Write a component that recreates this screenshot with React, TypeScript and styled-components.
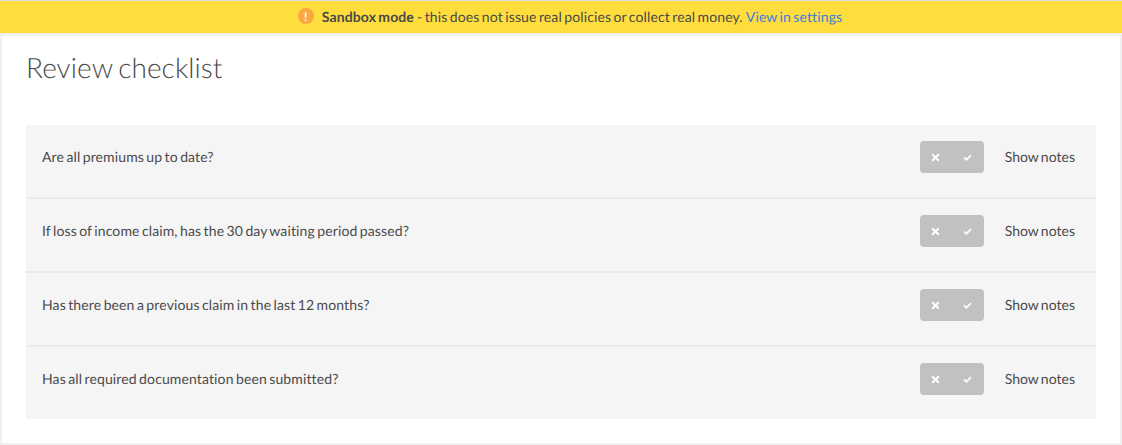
import styled, { createGlobalStyle } from "styled-components"

const questions = [
  "Are all premiums up to date?",
  "If loss of income claim, has the 30 day waiting period passed?",
  "Has there been a previous claim in the last 12 months?",
  "Has all required documentation been submitted?",
]

const Global = createGlobalStyle`
html, body {
  margin: 0;
  background: #f0f0f0;
}
body {
  font-family: Lato, "Open Sans", sans-serif;
  color: #4a4a4a;
  letter-spacing: 0.12px;
  word-spacing: -1.33px;
  text-rendering: geometricPrecision;
}
* {
  box-sizing: border-box;
}
`

const Page = styled.div`
width: 1122px;
height: 445px;
overflow: hidden;
border-top: 1px solid #dcdcdc;
`

const Banner = styled.div`
align-items: center;
background: #ffdd3c;
display: flex;
font-size: 14px;
height: 32px;
justify-content: center;
padding: 0 0 2px 18px;
`

const WarnIcon = styled.span`
align-items: center;
background: #f9a73e;
border-radius: 50%;
color: #fff;
display: inline-flex;
font-size: 12px;
font-weight: 700;
height: 16px;
justify-content: center;
margin-right: 8px;
width: 16px;
`

const Strong = styled.strong`
font-weight: 700;
margin-right: 3px;
`

const Link = styled.a`
color: #3b7ddd;
margin-left: 3px;
`

const Card = styled.main`
background: #fff;
height: 407px;
margin: 3px 2px 0;
padding: 0 24px;
`

const Title = styled.h1`
color: #4a4a4a;
font-size: 28px;
font-weight: 300;
letter-spacing: 0.07px;
line-height: 34px;
margin: 0;
padding: 14px 0 41px;
word-spacing: -2px;
`

const List = styled.div`
background: #f5f5f5;
`

const Row = styled.div`
align-items: center;
border-bottom: 2px solid #e9e9e9;
display: flex;
font-size: 14px;
padding: 16px 21px 24px 16px;

&:last-child {
  border-bottom: 0;
}
`

const Question = styled.span`
flex: 1;
padding-bottom: 2px;
`

const Toggle = styled.div`
background: #c1c1c1;
border-radius: 4px;
display: flex;
height: 32px;
margin-right: 21px;
width: 64px;
`

const ToggleSide = styled.button`
align-items: center;
background: none;
border: 0;
display: flex;
flex: 1;
justify-content: center;
padding: 0;
`

const Notes = styled.span`
color: #4a4a4a;
letter-spacing: 0.02px;
padding-bottom: 2px;
`

const Cross = () => <svg width="9" height="9" viewBox="0 0 9 9">
  <path d="M1.2 1.2l6.6 6.6M7.8 1.2L1.2 7.8" stroke="#fff" strokeWidth="2" fill="none" />
</svg>

const Check = () => <svg width="9" height="7" viewBox="0 0 10 8">
  <path d="M1 4l2.8 2.6L9 1.2" stroke="#fff" strokeOpacity="0.9" strokeWidth="2.2" fill="none" />
</svg>

export default function App() {
  return <Page>
    <Global />
    <Banner>
      <WarnIcon>!</WarnIcon>
      <Strong>Sandbox mode</Strong> - this does not issue real policies or collect real money.
      <Link>View in settings</Link>
    </Banner>
    <Card>
      <Title>Review checklist</Title>
      <List>
        {questions.map(q => <Row key={q}>
          <Question>{q}</Question>
          <Toggle>
            <ToggleSide><Cross /></ToggleSide>
            <ToggleSide><Check /></ToggleSide>
          </Toggle>
          <Notes>Show notes</Notes>
        </Row>)}
      </List>
    </Card>
  </Page>
}
